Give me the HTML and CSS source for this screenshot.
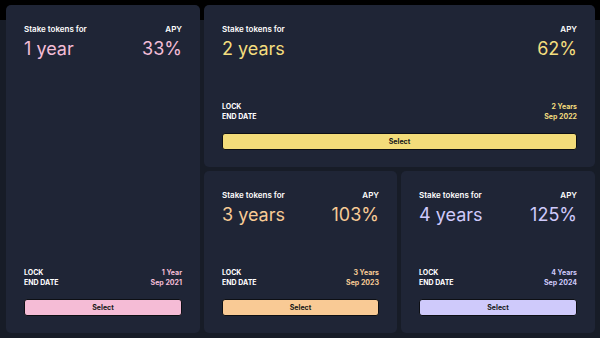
FILE: index.html
```html
<!DOCTYPE html>
<html>
<head>
<meta charset="utf-8">
<link rel="stylesheet" href="styles.css">
</head>
<body>
<div class="page">
  <div class="grid">
    <div class="card c1 pink">
      <div class="top">
        <div class="row labels"><span>Stake tokens for</span><span>APY</span></div>
        <div class="row values"><span>1 year</span><span>33%</span></div>
      </div>
      <div class="bottom">
        <div class="row info"><span class="k">LOCK</span><span class="v">1 Year</span></div>
        <div class="row info"><span class="k">END DATE</span><span class="v">Sep 2021</span></div>
        <button class="btn">Select</button>
      </div>
    </div>
    <div class="card c2 yellow">
      <div class="top">
        <div class="row labels"><span>Stake tokens for</span><span>APY</span></div>
        <div class="row values"><span>2 years</span><span>62%</span></div>
      </div>
      <div class="bottom">
        <div class="row info"><span class="k">LOCK</span><span class="v">2 Years</span></div>
        <div class="row info"><span class="k">END DATE</span><span class="v">Sep 2022</span></div>
        <button class="btn">Select</button>
      </div>
    </div>
    <div class="card orange">
      <div class="top">
        <div class="row labels"><span>Stake tokens for</span><span>APY</span></div>
        <div class="row values"><span>3 years</span><span>103%</span></div>
      </div>
      <div class="bottom">
        <div class="row info"><span class="k">LOCK</span><span class="v">3 Years</span></div>
        <div class="row info"><span class="k">END DATE</span><span class="v">Sep 2023</span></div>
        <button class="btn">Select</button>
      </div>
    </div>
    <div class="card lav">
      <div class="top">
        <div class="row labels"><span>Stake tokens for</span><span>APY</span></div>
        <div class="row values"><span>4 years</span><span>125%</span></div>
      </div>
      <div class="bottom">
        <div class="row info"><span class="k">LOCK</span><span class="v">4 Years</span></div>
        <div class="row info"><span class="k">END DATE</span><span class="v">Sep 2024</span></div>
        <button class="btn">Select</button>
      </div>
    </div>
  </div>
</div>
</body>
</html>
```
FILE: styles.css
```css
html, body {
  margin: 0;
  padding: 0;
}
body {
  width: 600px;
  height: 338px;
  overflow: hidden;
  background: linear-gradient(to bottom, #000 0, #000 20px, #171c27 20px);
  font-family: Inter, "Noto Sans", sans-serif;
  color: #fff;
}
.page {
  padding: 5px 5px 0 6px;
}
.grid {
  display: grid;
  grid-template-columns: 194px 193px 194px;
  grid-template-rows: 162px 162px;
  gap: 4px;
}
.card {
  background: #1f2536;
  border-radius: 5px;
  padding: 19px 18px 17px 18px;
  display: flex;
  flex-direction: column;
  justify-content: space-between;
  box-sizing: border-box;
}
.c1 { grid-row: 1 / span 2; }
.c2 { grid-column: 2 / span 2; }
.row {
  display: flex;
  justify-content: space-between;
  align-items: baseline;
}
.labels {
  font-size: 8px;
  font-weight: 600;
  line-height: 10px;
}
.values {
  font-size: 18px;
  font-weight: 400;
  line-height: 22px;
  margin-top: 4px;
}
.info {
  font-size: 7px;
  font-weight: 700;
  line-height: 10px;
}
.btn {
  display: block;
  width: 100%;
  height: 17px;
  margin-top: 11px;
  border: 1px solid #0d0f14;
  border-radius: 3px;
  font-family: inherit;
  font-size: 7px;
  font-weight: 700;
  color: #1a1a1a;
  padding: 0;
  cursor: pointer;
}
.pink .values, .pink .v { color: #f4bdd6; }
.pink .btn { background: #f5bcd6; }
.yellow .values, .yellow .v { color: #f3dd7e; }
.yellow .btn { background: #f3dc7a; }
.orange .values, .orange .v { color: #f8cb95; }
.orange .btn { background: #f9ca95; }
.lav .values, .lav .v { color: #cfcafb; }
.lav .btn { background: #cfcafb; }
```
